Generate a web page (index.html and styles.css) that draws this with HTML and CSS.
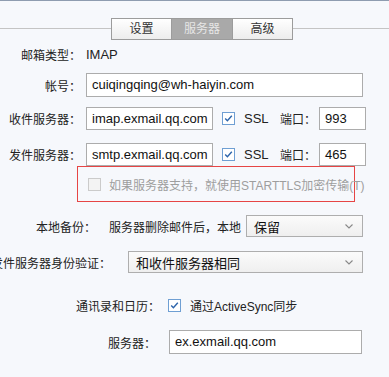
FILE: index.html
```html
<!DOCTYPE html>
<html lang="zh-CN">
<head>
    <meta charset="UTF-8">
    <meta name="viewport" content="width=device-width, initial-scale=1.0">
    <title>账户设置</title>
    <link rel="stylesheet" href="styles.css">
</head>
<body>
    <div class="topline"></div>

    <div class="tabs">
        <div class="tab">设置</div>
        <div class="tab active">服务器</div>
        <div class="tab">高级</div>
    </div>

    <div class="row row-type">
        <div class="label">邮箱类型：</div>
        <div class="value">IMAP</div>
    </div>

    <div class="row row-account">
        <div class="label">帐号：</div>
        <div class="input wide">cuiqingqing@wh-haiyin.com</div>
    </div>

    <div class="row row-in">
        <div class="label">收件服务器：</div>
        <div class="input host">imap.exmail.qq.com</div>
        <svg class="check" width="13" height="13" viewBox="0 0 13 13">
            <rect x="0.5" y="0.5" width="12" height="12" fill="#fff" stroke="#6f9fd3"/>
            <path d="M3.2 6.6 L5.4 8.8 L9.8 3.8" fill="none" stroke="#2c64ab" stroke-width="1.4"/>
        </svg>
        <span class="ssl">SSL</span>
        <span class="port-label">端口：</span>
        <div class="input port">993</div>
    </div>

    <div class="row row-out">
        <div class="label">发件服务器：</div>
        <div class="input host">smtp.exmail.qq.com</div>
        <svg class="check" width="13" height="13" viewBox="0 0 13 13">
            <rect x="0.5" y="0.5" width="12" height="12" fill="#fff" stroke="#6f9fd3"/>
            <path d="M3.2 6.6 L5.4 8.8 L9.8 3.8" fill="none" stroke="#2c64ab" stroke-width="1.4"/>
        </svg>
        <span class="ssl">SSL</span>
        <span class="port-label">端口：</span>
        <div class="input port">465</div>
    </div>

    <div class="starttls">
        <svg class="check" width="13" height="13" viewBox="0 0 13 13">
            <rect x="0.5" y="0.5" width="12" height="12" fill="#f3f3f3" stroke="#cbcbcb"/>
        </svg>
        <span class="disabled">如果服务器支持，就使用STARTTLS加密传输(T)</span>
    </div>

    <div class="row row-backup">
        <div class="label">本地备份：</div>
        <span class="note">服务器删除邮件后，本地</span>
        <div class="select backup">
            <span>保留</span>
            <svg width="8" height="5" viewBox="0 0 8 5"><path d="M0.5 0.5 L4 4 L7.5 0.5" fill="none" stroke="#888" stroke-width="1.1"/></svg>
        </div>
    </div>

    <div class="row row-auth">
        <div class="label">发件服务器身份验证：</div>
        <div class="select auth">
            <span>和收件服务器相同</span>
            <svg width="8" height="5" viewBox="0 0 8 5"><path d="M0.5 0.5 L4 4 L7.5 0.5" fill="none" stroke="#888" stroke-width="1.1"/></svg>
        </div>
    </div>

    <div class="row row-sync">
        <div class="label">通讯录和日历：</div>
        <svg class="check" width="13" height="13" viewBox="0 0 13 13">
            <rect x="0.5" y="0.5" width="12" height="12" fill="#fff" stroke="#6f9fd3"/>
            <path d="M3.2 6.6 L5.4 8.8 L9.8 3.8" fill="none" stroke="#2c64ab" stroke-width="1.4"/>
        </svg>
        <span class="sync-text">通过ActiveSync同步</span>
    </div>

    <div class="row row-server">
        <div class="label">服务器：</div>
        <div class="input server">ex.exmail.qq.com</div>
    </div>
</body>
</html>
```

FILE: styles.css
```css
body {
    margin: 0;
    background-color: #f6f8fc;
    font-family: "Liberation Sans", "Noto Sans CJK SC", sans-serif;
    font-size: 12px;
    color: #222;
    overflow: hidden;
}

.topline {
    height: 1px;
    background-color: #8e9cb0;
}

.tabs {
    position: relative;
    display: flex;
    margin-top: 17px;
    padding-left: 111px;
    height: 22px;
}

.tabs::before {
    content: "";
    position: absolute;
    left: 0;
    right: 0;
    top: 10px;
    border-top: 1px solid #c4c4c4;
}

.tab {
    position: relative;
    width: 59px;
    height: 20px;
    line-height: 20px;
    text-align: center;
    border: 1px solid #9c9c9c;
    background: linear-gradient(#ffffff, #ededed);
    color: #333;
    font-size: 12px;
}

.tab + .tab {
    border-left: none;
}

.tab.active {
    background: #a9a9a9;
    color: #e6e6e6;
    width: 60px;
}

.row {
    display: flex;
    align-items: center;
}

.label {
    display: flex;
    justify-content: flex-end;
    white-space: nowrap;
    flex-shrink: 0;
    width: 81px;
    margin-right: 5px;
    color: #222;
}

.value {
    font-size: 13px;
}

.row-type {
    margin-top: 4px;
    height: 20px;
}

.row-account {
    margin-top: 9px;
}

.row-in {
    margin-top: 10px;
}

.row-out {
    margin-top: 13px;
}

.input {
    box-sizing: border-box;
    height: 24px;
    line-height: 22px;
    padding-left: 5px;
    border: 1px solid #acacac;
    background-color: #fff;
    font-size: 13px;
    color: #111;
    white-space: nowrap;
    overflow: hidden;
}

.input.wide {
    width: 277px;
}

.input.host {
    width: 127px;
    height: 23px;
}

.input.port {
    width: 47px;
    height: 23px;
}

.check {
    display: block;
    flex-shrink: 0;
}

.row-in .check,
.row-out .check {
    margin-left: 9px;
}

.ssl {
    margin-left: 9px;
    font-size: 13px;
    width: 27px;
}

.port-label {
    margin-left: 9px;
    margin-right: 3px;
}

.starttls {
    box-sizing: border-box;
    display: flex;
    align-items: center;
    margin-left: 77px;
    width: 278px;
    height: 36px;
    padding-left: 10px;
    border: 1px solid #e64545;
    white-space: nowrap;
}

.disabled {
    margin-left: 8px;
    color: #9e9e9e;
    font-size: 12px;
}

.row-backup {
    margin-top: 13px;
}

.row-backup .label {
    width: 96px;
    margin-right: 13px;
}

.note {
    white-space: nowrap;
}

.select {
    box-sizing: border-box;
    display: flex;
    align-items: center;
    justify-content: space-between;
    height: 22px;
    padding: 0 9px 0 7px;
    border: 1px solid #aeaeae;
    background: linear-gradient(#fbfbfb, #efefef);
    font-size: 13px;
    color: #111;
}

.select.backup {
    margin-left: 5px;
    width: 117px;
}

.row-auth {
    margin-top: 14px;
}

.row-auth .label {
    width: 111px;
    margin-right: 17px;
}

.select.auth {
    width: 235px;
}

.row-sync {
    margin-top: 24px;
}

.row-sync .label {
    width: 160px;
    margin-right: 8px;
}

.sync-text {
    margin-left: 9px;
}

.row-server {
    margin-top: 16px;
}

.row-server .label {
    width: 156px;
    margin-right: 13px;
}

.input.server {
    width: 193px;
}
```
